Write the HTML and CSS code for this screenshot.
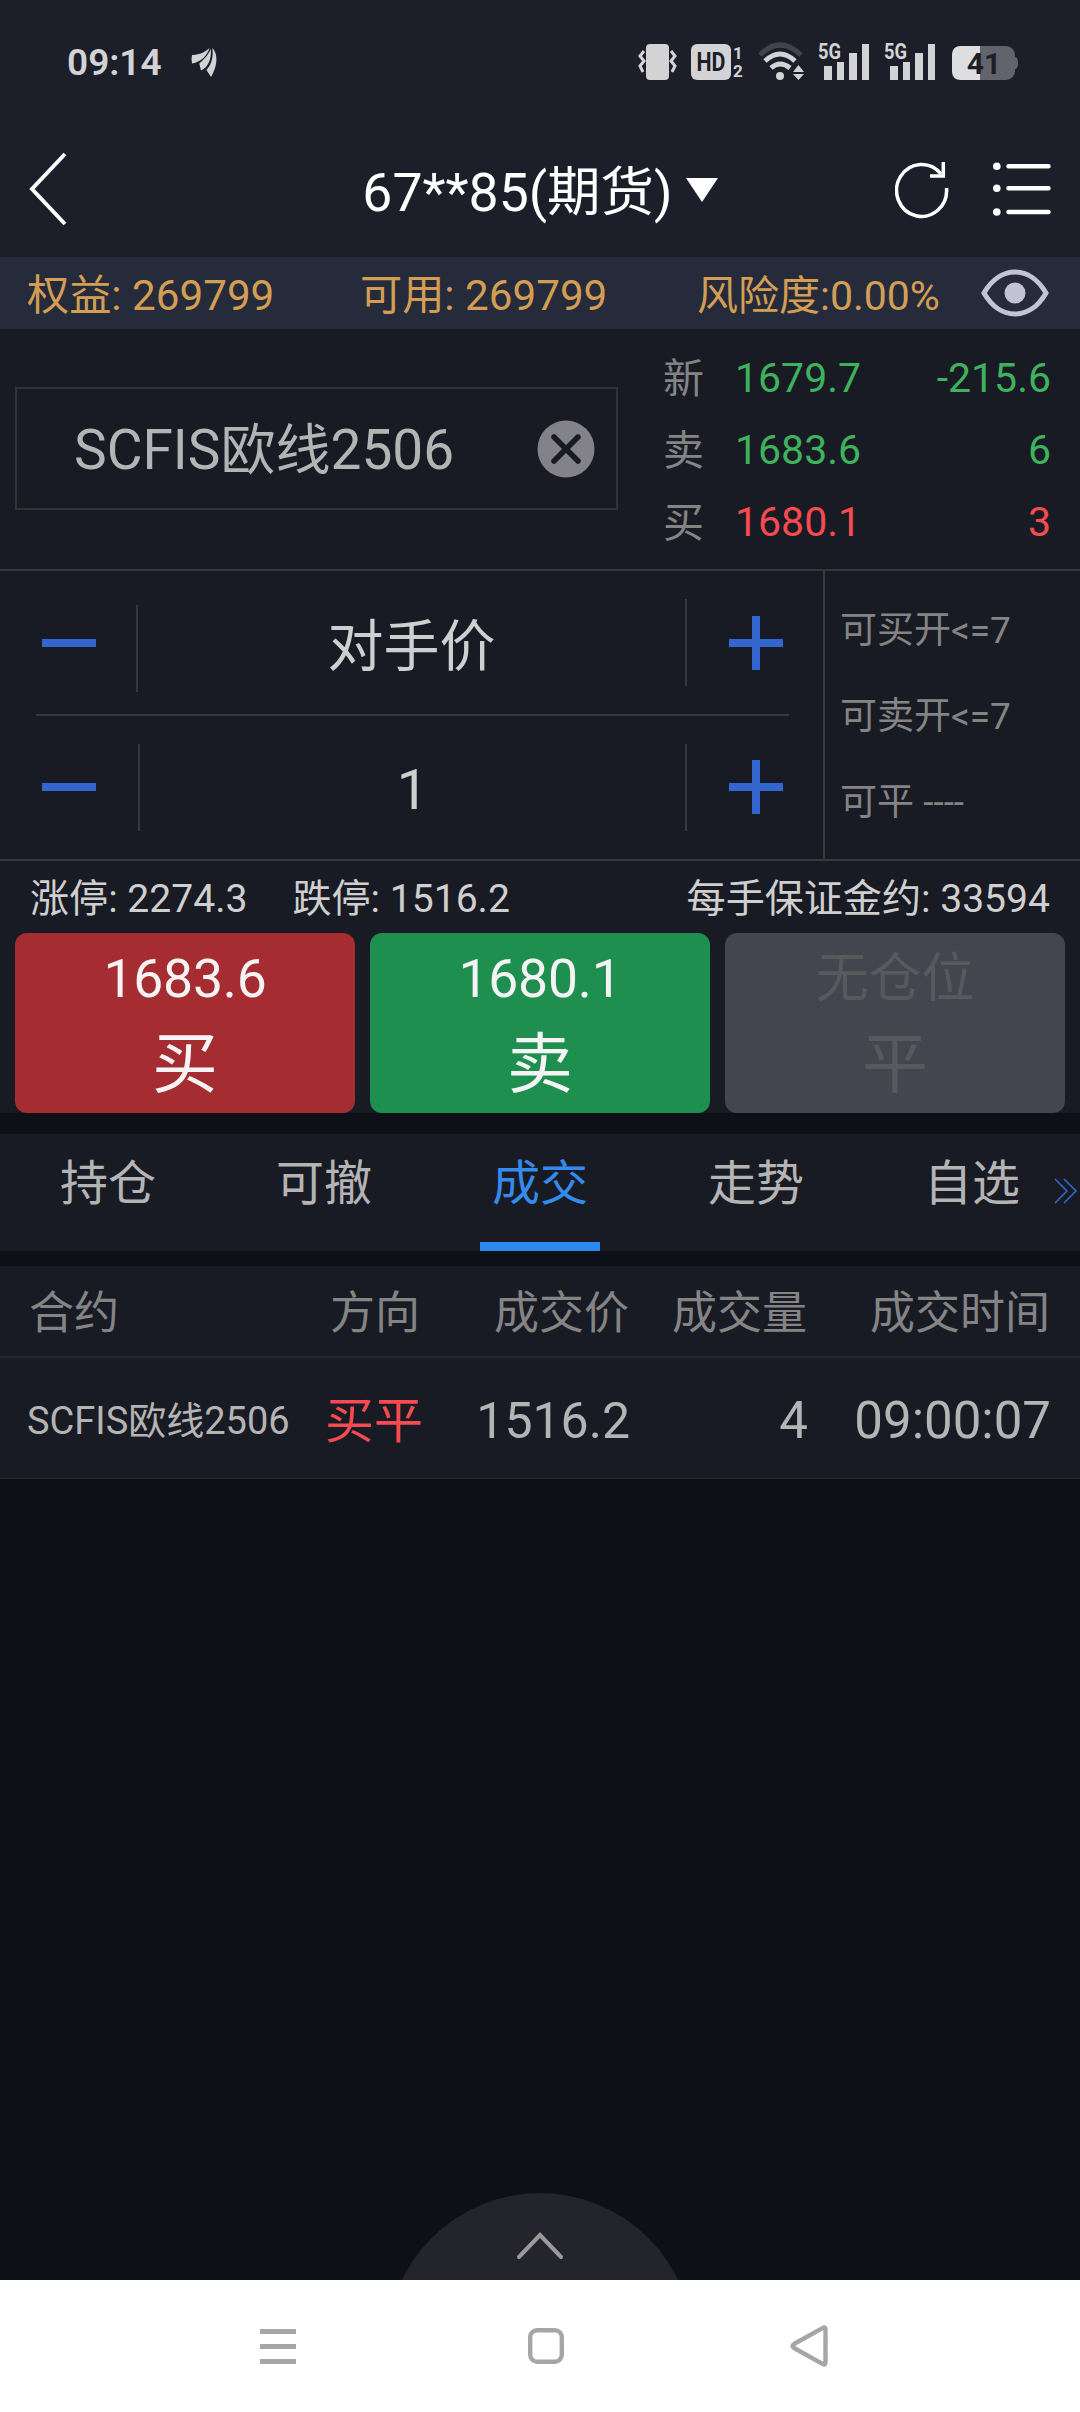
FILE: index.html
```html
<!DOCTYPE html>
<html lang="zh-CN">
<head>
    <meta charset="UTF-8">
    <meta name="viewport" content="width=device-width, initial-scale=1.0">
    <title>期货交易</title>
    <link rel="stylesheet" href="styles.css">
</head>
<body>
    <div class="statusbar">
        <span class="clock">09:14</span>
        <svg class="leaf" width="28" height="32" viewBox="0 0 28 32">
            <path d="M2 9C8 9 14 7 19.500 2C17 10 11 16 2 17.500Q1 13 2 9Z"/>
            <path d="M20.700 3C17 11 14 13 9.300 17.500L11 24.500C17 22 22 14 20.700 3Z"/>
            <path d="M22.300 2C27 6 29 17 21 31L16.500 24C22 18 23.500 10 22.300 2Z"/>
        </svg>
        <div class="status-icons">
            <svg width="40" height="40" viewBox="0 0 40 40">
                <rect x="8" y="4" width="23" height="36" rx="4"/>
                <path class="buzz" d="M6 11L2 16L6 21L2 26L5 32M33 11L37 16L33 21L37 26L34 32"/>
            </svg>
            <svg class="hd" width="53" height="40" viewBox="0 0 53 40">
                <rect x="0" y="4" width="40" height="36" rx="6"/>
                <text class="dark" x="20" y="31" font-size="25" text-anchor="middle" textLength="29" lengthAdjust="spacingAndGlyphs">HD</text>
                <text x="42" y="19" font-size="17">1</text>
                <text x="42" y="37" font-size="17">2</text>
            </svg>
            <svg class="wifi" width="46" height="40" viewBox="0 0 46 40">
                <path class="arc faint" d="M2 15Q22 -5 43 15"/>
                <path class="arc" d="M7 21Q22 7 37 21"/>
                <path class="arc" d="M13 28Q22 20 32 28"/>
                <circle cx="22" cy="36" r="4"/>
                <path d="M35 32L40.500 25L46 32ZM35 34L40.500 40L46 34Z"/>
            </svg>
            <svg class="signal" width="52" height="40" viewBox="0 0 52 40">
                <text x="0" y="19" font-size="22" textLength="23" lengthAdjust="spacingAndGlyphs">5G</text>
                <path d="M6 26h8v14h-8ZM19 22h7v18h-7ZM31 13h8v27h-8ZM44 4h7v36h-7Z"/>
            </svg>
            <svg class="signal" width="52" height="40" viewBox="0 0 52 40">
                <text x="0" y="19" font-size="22" textLength="23" lengthAdjust="spacingAndGlyphs">5G</text>
                <path d="M6 26h8v14h-8ZM19 22h7v18h-7ZM31 13h8v27h-8ZM44 4h7v36h-7Z"/>
            </svg>
            <svg class="battery" width="67" height="40" viewBox="0 0 67 40">
                <rect class="empty" x="0" y="6" width="63" height="34" rx="9"/>
                <path class="empty" d="M63 17q3 0 3 6t-3 6Z"/>
                <path class="full" d="M28 6H9Q0 6 0 15V31Q0 40 9 40H28Z"/>
                <text class="dark" x="32" y="34" font-size="30" text-anchor="middle">41</text>
            </svg>
        </div>
    </div>

    <div class="header">
        <svg class="back" width="40" height="76" viewBox="0 0 40 76">
            <path d="M36 3L3 38L36 73"/>
        </svg>
        <div class="account">67**85(期货)<span class="caret"></span></div>
        <div class="actions">
            <svg width="54" height="58" viewBox="0 0 54 58">
                <path d="M51.500 27A25 26 0 1 1 46 13"/>
                <path d="M48.300 1V15H35"/>
            </svg>
            <svg class="list" width="58" height="56" viewBox="0 0 58 56">
                <circle cx="3.800" cy="5.300" r="3.800"/>
                <circle cx="3.800" cy="27.300" r="3.800"/>
                <circle cx="3.800" cy="51" r="3.800"/>
                <path d="M15.500 5.300H55.500M15.500 27.300H55.500M15.500 51H55.500"/>
            </svg>
        </div>
    </div>

    <div class="funds">
        <span class="equity">权益: 269799</span>
        <span class="usable">可用: 269799</span>
        <span class="risk">风险度:0.00%</span>
        <svg class="eye" width="68" height="48" viewBox="0 0 68 48">
            <path d="M3 24C19 -4 49 -4 65 24C49 52 19 52 3 24Z"/>
            <circle cx="34" cy="24" r="10.500"/>
        </svg>
    </div>

    <div class="panel">
        <div class="quote">
            <div class="contract">
                <span>SCFIS欧线2506</span>
                <svg width="58" height="58" viewBox="0 0 58 58">
                    <circle cx="29" cy="29" r="28.500"/>
                    <path d="M17 17L41 41M41 17L17 41"/>
                </svg>
            </div>
            <div class="prices">
                <div class="price-row green"><label>新</label><span>1679.7</span><b>-215.6</b></div>
                <div class="price-row green"><label>卖</label><span>1683.6</span><b>6</b></div>
                <div class="price-row red"><label>买</label><span>1680.1</span><b>3</b></div>
            </div>
        </div>

        <div class="order">
            <div class="steppers">
                <div class="stepper">
                    <div class="minus"></div>
                    <div class="sep sep-low"></div>
                    <div class="value">对手价</div>
                    <div class="sep"></div>
                    <div class="plus"></div>
                </div>
                <div class="divider"></div>
                <div class="stepper second">
                    <div class="minus"></div>
                    <div class="sep"></div>
                    <div class="value">1</div>
                    <div class="sep"></div>
                    <div class="plus"></div>
                </div>
            </div>
            <div class="limits">
                <div>可买开&lt;=7</div>
                <div>可卖开&lt;=7</div>
                <div>可平 ----</div>
            </div>
        </div>

        <div class="margin">
            <span>涨停: 2274.3</span>
            <span class="low">跌停: 1516.2</span>
            <span class="per">每手保证金约: 33594</span>
        </div>

        <div class="buttons">
            <div class="btn buy"><span>1683.6</span><strong>买</strong></div>
            <div class="btn sell"><span>1680.1</span><strong>卖</strong></div>
            <div class="btn close"><span>无仓位</span><strong>平</strong></div>
        </div>
    </div>

    <div class="tabs">
        <div class="tab">持仓</div>
        <div class="tab">可撤</div>
        <div class="tab active">成交</div>
        <div class="tab">走势</div>
        <div class="tab">自选</div>
        <svg class="more" width="24" height="26" viewBox="0 0 24 26">
            <path d="M1 1L13 13L1 25M10 1L22 13L10 25"/>
        </svg>
    </div>

    <div class="deals">
        <div class="deal-head">
            <div>合约</div><div>方向</div><div>成交价</div><div>成交量</div><div>成交时间</div>
        </div>
        <div class="deal-row">
            <div class="name">SCFIS欧线2506</div><div class="side">买平</div><div class="deal-price">1516.2</div><div>4</div><div>09:00:07</div>
        </div>
    </div>

    <div class="empty-area">
        <svg width="276" height="87" viewBox="0 0 276 87">
            <circle cx="138" cy="153" r="153"/>
            <path d="M117 64L138 42L159 64"/>
        </svg>
    </div>

    <div class="navbar">
        <svg width="36" height="36" viewBox="0 0 36 36">
            <path class="solid" d="M0 1h36v5H0ZM0 16h36v5H0ZM0 31h36v5H0Z"/>
        </svg>
        <svg class="home" width="36" height="36" viewBox="0 0 36 36">
            <rect x="2.200" y="2.200" width="31.600" height="31.600" rx="7"/>
        </svg>
        <svg width="38" height="42" viewBox="0 0 38 42">
            <path d="M32 3.500Q35.500 1 35.500 5V37Q35.500 41 32 38.500L4 23Q1 21 4 19Z"/>
        </svg>
    </div>
</body>
</html>
```

FILE: styles.css
```css
* {
    box-sizing: border-box;
}
body {
    margin: 0;
    width: 1080px;
    height: 2412px;
    display: flex;
    flex-direction: column;
    overflow: hidden;
    background: #0d1017;
    color: #b4b4b4;
    font-family: Roboto, "Noto Sans CJK SC", sans-serif;
    white-space: nowrap;
}
svg {
    display: block;
    flex: none;
    fill: none;
}

/* status bar */
.statusbar {
    height: 120px;
    padding: 40px 61px 0 67px;
    display: flex;
    align-items: flex-start;
    background: #1c1f29;
}
.clock {
    width: 123px;
    padding-top: 1px;
    font-size: 37px;
    line-height: 44px;
    font-weight: 600;
    color: #d3d3d5;
}
.leaf {
    margin-top: 6px;
    fill: #d3d3d5;
}
.status-icons {
    margin-left: auto;
    display: flex;
    fill: #d3d3d5;
}
.status-icons svg {
    fill: #d3d3d5;
    font-weight: 700;
}
.status-icons .buzz {
    fill: none;
    stroke: #d3d3d5;
    stroke-width: 3;
}
.status-icons .dark {
    fill: #1c1f29;
}
.hd {
    margin-left: 13px;
}
.wifi {
    margin-left: 14px;
}
.status-icons .arc {
    fill: none;
    stroke: #d3d3d5;
    stroke-width: 5;
}
.status-icons .faint {
    stroke: #41434e;
}
.signal {
    margin-left: 14px;
}
.battery {
    margin-left: 16px;
}
.empty {
    fill: #62646b;
}
.full {
    fill: #dedee0;
}

/* title */
.header {
    height: 137px;
    padding: 0 29px;
    display: grid;
    grid-template-columns: 1fr auto 1fr;
    align-items: start;
    background: #1c1f29;
}
.back {
    margin-top: 31px;
    stroke: #fff;
    stroke-width: 4;
}
.account {
    padding-top: 33px;
    display: flex;
    align-items: center;
    font-size: 53.5px;
    line-height: 80px;
    color: #fff;
}
.caret {
    margin: 0 0 6px 13px;
    border: 16px solid transparent;
    border-top: 24px solid #fff;
    border-bottom: 0;
}
.actions {
    padding-top: 41px;
    display: flex;
    justify-content: flex-end;
    gap: 44px;
    stroke: #fff;
    stroke-width: 3.5;
}
.list {
    stroke-width: 4.5;
    stroke-linecap: round;
}
.list circle {
    fill: #fff;
    stroke: none;
}

/* funds */
.funds {
    height: 72px;
    padding: 0 31px 0 27px;
    display: flex;
    align-items: center;
    background: #262b3b;
    color: #d39e54;
    font-size: 42.2px;
}
.funds span {
    padding-top: 6px;
    line-height: 60px;
}
.equity {
    width: 333px;
}
.usable {
    width: 337px;
}
.risk {
    font-size: 41px;
}
.eye {
    margin-left: auto;
    stroke: #c4c3d4;
    stroke-width: 5;
}
.eye circle {
    fill: #c4c3d4;
    stroke: none;
}

/* trade panel */
.panel {
    background: #191b24;
}
.quote {
    height: 242px;
    padding: 13px 29px 0 15px;
    display: flex;
    border-bottom: 2px solid #38383a;
}
.contract {
    width: 603px;
    height: 123px;
    margin-top: 45px;
    padding: 0 21px 0 57px;
    display: flex;
    align-items: center;
    justify-content: space-between;
    border: 2px solid #333335;
    font-size: 55px;
}
.contract span {
    padding-top: 3px;
    line-height: 80px;
}
.contract circle {
    fill: #838289;
}
.contract path {
    stroke: #191b24;
    stroke-width: 5.5;
    stroke-linecap: round;
}
.prices {
    flex: 1;
    margin-left: 45px;
}
.price-row {
    display: flex;
    font-size: 41px;
    line-height: 72px;
}
.price-row label {
    width: 72px;
    padding-top: 1px;
    height: 72px;
    color: #848484;
}
.price-row b {
    margin-left: auto;
    font-weight: 400;
}
.green {
    color: #3eb25c;
}
.red {
    color: #f84a51;
}
.order {
    height: 290px;
    display: flex;
    border-bottom: 2px solid #38383a;
}
.steppers {
    width: 825px;
    border-right: 2px solid #38383a;
}
.stepper {
    height: 143px;
    padding: 0 40px 0 42px;
    display: flex;
    align-items: center;
}
.second {
    height: 142px;
}
.divider {
    height: 2px;
    margin: 0 34px 0 36px;
    background: #38383a;
}
.minus {
    width: 54px;
    height: 8px;
    background: #3366cc;
}
.sep {
    width: 2px;
    height: 87px;
    background: #38383a;
}
.minus + .sep {
    margin-left: 40px;
}
.second .minus + .sep {
    margin-left: 42px;
}
.sep-low {
    margin-top: 12px;
}
.value {
    flex: 1;
    padding-top: 8px;
    text-align: center;
    font-size: 56px;
    line-height: 80px;
    color: #cfcfcf;
}
.second .value {
    padding-top: 6px;
}
.plus {
    width: 54px;
    height: 54px;
    margin-left: 42px;
    background:
        linear-gradient(#3366cc, #3366cc) center / 54px 8px no-repeat,
        linear-gradient(#3366cc, #3366cc) center / 8px 54px no-repeat;
}
.limits {
    padding: 17px 0 0 15px;
    font-size: 37px;
    line-height: 86px;
    color: #848484;
}
.margin {
    height: 72px;
    padding: 4px 30px 0 30px;
    display: flex;
    font-size: 39.1px;
    line-height: 69px;
    color: #cfcfcf;
}
.low {
    margin-left: 45px;
}
.per {
    margin-left: auto;
}
.buttons {
    padding: 0 15px;
    display: flex;
    gap: 15px;
}
.btn {
    flex: 1;
    height: 180px;
    padding-top: 13px;
    display: flex;
    flex-direction: column;
    align-items: center;
    gap: 14px;
    border-radius: 12px;
    color: #f5f3f4;
}
.btn span {
    font-size: 53.5px;
    line-height: 65px;
    letter-spacing: -0.2px;
}
.btn strong {
    font-size: 66px;
    line-height: 80px;
    font-weight: 400;
}
.buy {
    background: #a52d31;
}
.sell {
    background: #1f8f50;
}
.close {
    background: #44454f;
    color: #58595d;
}
.close span {
    padding-top: 1px;
    margin-bottom: -1px;
    font-size: 53px;
}

/* tabs */
.tabs {
    position: relative;
    height: 117px;
    margin-top: 21px;
    display: flex;
    background: #191b24;
}
.tab {
    flex: 1;
    display: flex;
    flex-direction: column;
    align-items: center;
    justify-content: space-between;
    font-size: 48px;
    line-height: 100px;
}
.active {
    color: #348bed;
}
.active::after {
    content: "";
    width: 120px;
    height: 9px;
    background: #2c88ee;
}
.more {
    position: absolute;
    right: 2px;
    top: 44px;
    stroke: #3366cc;
    stroke-width: 1.6;
}

/* deals */
.deals {
    margin-top: 15px;
    background: #191b24;
}
.deal-head,
.deal-row {
    display: grid;
    grid-template-columns: 300px 94px 209px 178px 243px;
    padding-left: 27px;
    text-align: right;
}
.deal-head {
    height: 92px;
    padding-top: 5px;
    border-bottom: 2px solid #24272f;
    font-size: 45px;
    line-height: 86px;
    color: #848484;
}
.deal-head div {
    padding-right: 1px;
}
.deal-head div:first-child {
    padding-left: 2px;
}
.deal-head div:first-child,
.name {
    text-align: left;
}
.deal-row {
    height: 121px;
    padding-top: 6px;
    border-bottom: 1px solid #292b32;
    font-size: 51px;
    line-height: 114px;
}
.deal-row .name {
    font-size: 38px;
}
.deal-row .deal-price {
    font-size: 50px;
}
.side {
    display: flex;
    justify-content: flex-end;
    margin-right: -2px;
    padding-top: 1px;
    font-size: 49px;
    color: #f84a51;
}

/* bottom */
.empty-area {
    flex: 1;
    display: flex;
    justify-content: center;
    align-items: flex-end;
}
.empty-area circle {
    fill: #24242c;
}
.empty-area path {
    stroke: #999;
    stroke-width: 4;
    stroke-linecap: round;
}
.navbar {
    height: 132px;
    padding: 0 252px 0 260px;
    display: flex;
    justify-content: space-between;
    align-items: center;
    background: #fff;
}
.navbar svg {
    stroke: #a6a6a6;
    stroke-width: 4.4;
}
.navbar .home {
    margin-left: 5px;
}
.navbar .solid {
    fill: #a6a6a6;
    stroke: none;
}
```
